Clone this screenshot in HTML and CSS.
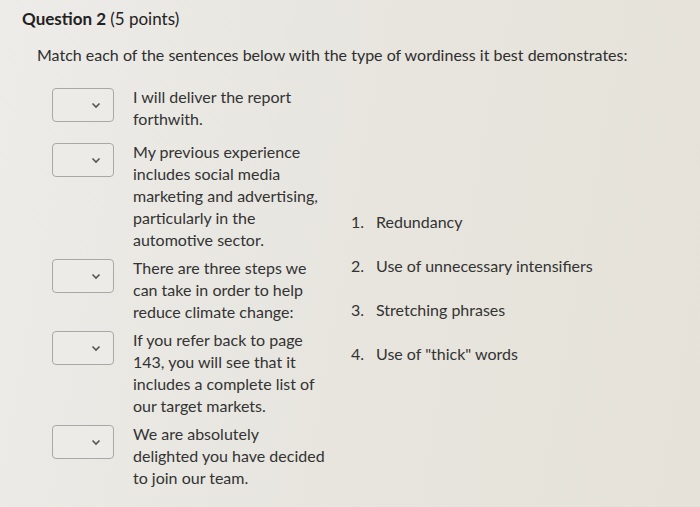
FILE: index.html
```html
<!DOCTYPE html>
<html lang="en">
<head>
    <meta charset="UTF-8">
    <meta name="viewport" content="width=device-width, initial-scale=1.0">
    <title>Question 2</title>
    <link rel="stylesheet" href="styles.css">
</head>
<body>

<div class="question">
    <h2 class="question-title">Question 2 <span class="points">(5 points)</span></h2>
    <p class="prompt">Match each of the sentences below with the type of wordiness it best demonstrates:</p>

    <div class="match">
        <div class="match-items">
            <div class="match-row first">
                <div class="answer-select">
                    <svg width="10" height="7" viewBox="0 0 10 7"><polyline points="1.5,1.5 5,5 8.5,1.5" fill="none" stroke="#555" stroke-width="1.6"/></svg>
                </div>
                <p class="match-text">I will deliver the report forthwith.</p>
            </div>
            <div class="match-row">
                <div class="answer-select">
                    <svg width="10" height="7" viewBox="0 0 10 7"><polyline points="1.5,1.5 5,5 8.5,1.5" fill="none" stroke="#555" stroke-width="1.6"/></svg>
                </div>
                <p class="match-text">My previous experience includes social media marketing and advertising, particularly in the automotive sector.</p>
            </div>
            <div class="match-row">
                <div class="answer-select">
                    <svg width="10" height="7" viewBox="0 0 10 7"><polyline points="1.5,1.5 5,5 8.5,1.5" fill="none" stroke="#555" stroke-width="1.6"/></svg>
                </div>
                <p class="match-text">There are three steps we can take in order to help reduce climate change:</p>
            </div>
            <div class="match-row">
                <div class="answer-select">
                    <svg width="10" height="7" viewBox="0 0 10 7"><polyline points="1.5,1.5 5,5 8.5,1.5" fill="none" stroke="#555" stroke-width="1.6"/></svg>
                </div>
                <p class="match-text">If you refer back to page 143, you will see that it includes a complete list of our target markets.</p>
            </div>
            <div class="match-row">
                <div class="answer-select">
                    <svg width="10" height="7" viewBox="0 0 10 7"><polyline points="1.5,1.5 5,5 8.5,1.5" fill="none" stroke="#555" stroke-width="1.6"/></svg>
                </div>
                <p class="match-text">We are absolutely delighted you have decided to join our team.</p>
            </div>
        </div>

        <ol class="options">
            <li><span class="num">1.</span>Redundancy</li>
            <li><span class="num">2.</span>Use of unnecessary intensifiers</li>
            <li><span class="num">3.</span>Stretching phrases</li>
            <li><span class="num">4.</span>Use of "thick" words</li>
        </ol>
    </div>
</div>

</body>
</html>
```

FILE: styles.css
```css
body {
    margin: 0;
    height: 507px;
    overflow: hidden;
    font-family: Lato, "Open Sans", sans-serif;
    color: #333;
    background: linear-gradient(100deg, #edece9 0%, #e8e6e0 40%, #e6e2d9 100%);
}
.question {
    padding: 8px 0 0 22px;
}
.question-title {
    margin: 0;
    font-size: 17px;
    line-height: 22px;
    font-weight: 700;
    color: #222;
}
.question-title .points {
    font-weight: 400;
}
.prompt {
    margin: 14px 0 0 15px;
    font-size: 16px;
    line-height: 22px;
    color: #2e2e2e;
}
.match {
    display: flex;
    margin: 20px 0 0 30px;
}
.match-items {
    display: flex;
    flex-direction: column;
    gap: 6px;
    width: 276px;
}
.match-row {
    display: flex;
    align-items: flex-start;
    gap: 19px;
}
.match-row.first {
    margin-bottom: 5px;
}
.answer-select {
    box-sizing: border-box;
    width: 62px;
    height: 34px;
    margin-top: 2px;
    border: 1px solid #a9a8a4;
    border-radius: 4px;
    background-color: #ecebe7;
    display: flex;
    align-items: center;
    justify-content: flex-end;
    padding-right: 12px;
}
.match-text {
    margin: 0;
    width: 193px;
    font-size: 16px;
    line-height: 22px;
    color: #333;
}
.options {
    list-style: none;
    margin: 0 0 0 23px;
    padding: 125px 0 0 0;
    font-size: 16px;
    line-height: 22px;
}
.options li {
    margin-bottom: 22px;
}
.options .num {
    display: inline-block;
    width: 25px;
}
```
